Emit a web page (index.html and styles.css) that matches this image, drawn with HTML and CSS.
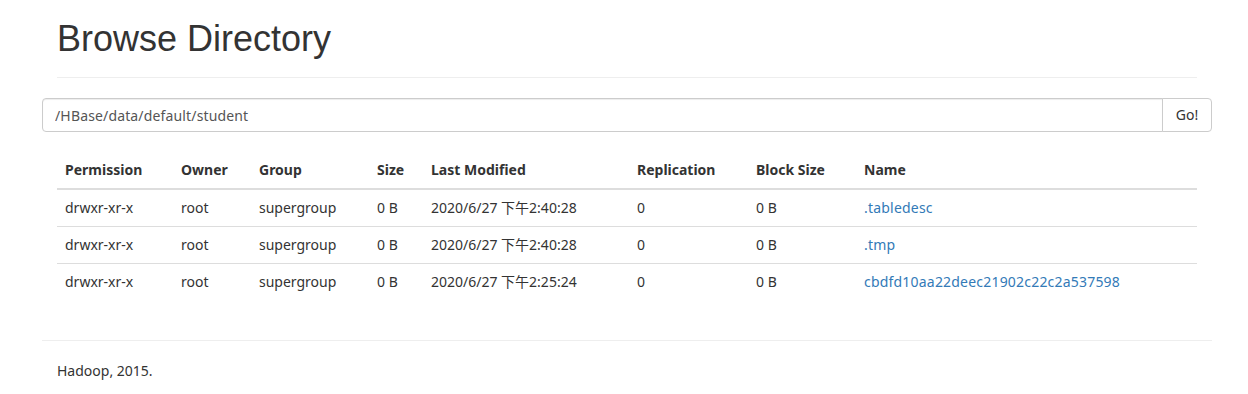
FILE: index.html
```html
<!DOCTYPE html>
<html lang="en">
<head>
  <meta charset="UTF-8"/>
  <title>Browsing HDFS</title>
  <link rel="stylesheet" href="styles.css">
</head>
<body>
  <div class="container">
    <div class="page-header"><h1>Browse Directory</h1></div>

    <div class="input-group">
      <input class="form-control" type="text" value="/HBase/data/default/student">
      <button class="btn">Go!</button>
    </div>

    <table class="table">
      <thead>
        <tr>
          <th class="c-perm">Permission</th>
          <th class="c-owner">Owner</th>
          <th class="c-group">Group</th>
          <th class="c-size">Size</th>
          <th class="c-mod">Last Modified</th>
          <th class="c-rep">Replication</th>
          <th class="c-block">Block Size</th>
          <th>Name</th>
        </tr>
      </thead>
      <tbody>
        <tr>
          <td>drwxr-xr-x</td><td>root</td><td>supergroup</td><td>0 B</td>
          <td>2020/6/27 下午2:40:28</td><td>0</td><td>0 B</td>
          <td><a href="#">.tabledesc</a></td>
        </tr>
        <tr>
          <td>drwxr-xr-x</td><td>root</td><td>supergroup</td><td>0 B</td>
          <td>2020/6/27 下午2:40:28</td><td>0</td><td>0 B</td>
          <td><a href="#">.tmp</a></td>
        </tr>
        <tr>
          <td>drwxr-xr-x</td><td>root</td><td>supergroup</td><td>0 B</td>
          <td>2020/6/27 下午2:25:24</td><td>0</td><td>0 B</td>
          <td><a href="#">cbdfd10aa22deec21902c22c2a537598</a></td>
        </tr>
      </tbody>
    </table>

    <hr>
    <div class="footer"><p>Hadoop, 2015.</p></div>
  </div>
</body>
</html>
```

FILE: styles.css
```css
*, *::before, *::after { box-sizing: border-box; }
html, body { margin: 0; background: #fff; }
body {
  font-family: "Noto Sans", "Noto Sans CJK SC", sans-serif;
  font-size: 14px; line-height: 20px; color: #333;
}
.container { width: 1170px; margin: 0 0 0 42px; }

.page-header { margin: 0 15px 20px; padding: 19px 0 18px; border-bottom: 1px solid #eee; }
.page-header h1 {
  margin: 0; font-family: "Liberation Sans", Arial, sans-serif;
  font-size: 36px; line-height: 40px; font-weight: 500; color: #333;
}

.input-group { display: flex; height: 34px; margin-bottom: 20px; }
.form-control {
  flex: 1; height: 34px; padding: 6px 12px; font: inherit; color: #555;
  letter-spacing: 0.15px;
  border: 1px solid #ccc; border-radius: 4px 0 0 4px; outline: none;
  box-shadow: inset 0 1px 1px rgba(0,0,0,0.075);
}
.btn {
  width: 50px; height: 34px; margin-left: -1px; padding: 6px 12px;
  font: inherit; color: #333; background: #fff;
  border: 1px solid #ccc; border-radius: 0 4px 4px 0;
}

.table { width: 1140px; margin: 0 15px; border-collapse: collapse; border-spacing: 0; }
.table th, .table td { padding: 8px; text-align: left; vertical-align: top; }
.table th { font-weight: 700; border-bottom: 2px solid #ddd; }
.table td { border-top: 1px solid #ddd; }
.table a { color: #337ab7; text-decoration: none; letter-spacing: 0.2px; }
.c-perm { width: 116px; }
.c-owner { width: 78px; }
.c-group { width: 118px; }
.c-size { width: 54px; }
.c-mod { width: 206px; }
.c-rep { width: 119px; }
.c-block { width: 108px; }

hr { margin: 40px 0 20px; border: 0; border-top: 1px solid #eee; }
.footer p { margin: 0 15px; }
```
